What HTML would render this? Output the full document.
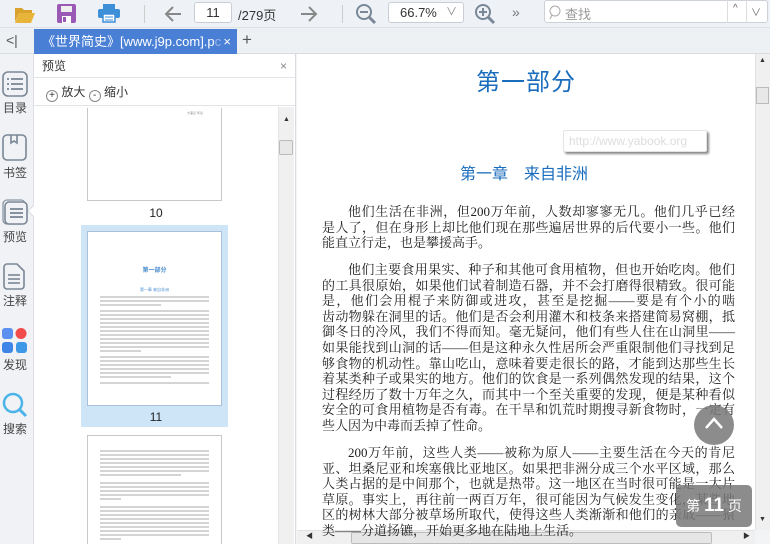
<!DOCTYPE html>
<html><head><meta charset="utf-8"><style>
*{margin:0;padding:0;box-sizing:border-box}
body{width:770px;height:544px;overflow:hidden;position:relative;background:#f3f4f6;font-family:"Liberation Sans","Noto Sans CJK SC",sans-serif;color:#333}
.abs{position:absolute}
.tb{left:0;top:0;width:770px;height:28px;background:#eef2f6;border-bottom:1px solid #dde2e8}
.tabbar{left:0;top:28px;width:770px;height:26px;background:#eef1f4;border-bottom:1px solid #d9dde2}
.tab{left:34px;top:29px;width:203px;height:25px;background:#4a7fd6;color:#fff;font-size:13px;line-height:25px;padding-left:8px;white-space:nowrap;overflow:hidden}
.side{left:0;top:54px;width:34px;height:490px;background:#f0f2f5;border-right:1px solid #dde0e4}
.side .lb{position:absolute;left:0;width:30px;font-size:12px;text-align:center;color:#444}
.panel{left:34px;top:54px;width:262px;height:490px;background:#fff;border-right:1px solid #d8dbe0}
.doc{left:297px;top:54px;width:458px;height:476px;background:#fff}
.txt{font-family:"Liberation Serif","Noto Serif CJK SC",serif;font-size:13px;color:#222;position:absolute;left:322px;width:413px}
.ln{height:15.6px;line-height:15.6px;white-space:nowrap;text-align:justify;text-align-last:justify}
.ln.i{padding-left:26px}
.ln.e{text-align-last:left}
.thumb{position:absolute;left:87px;width:135px;background:#fff;border:1px solid #c8c8c8}
.g{position:absolute;height:2px;background:#d4d4d4;left:12px;right:12px}
</style></head><body>
<div class="abs tb"></div>
<svg class="abs" style="left:14px;top:4px" width="22" height="20"><path d="M1 4h7l2 2h8v3H5L1 18z" fill="#d9a32e"/><path d="M5 9h16l-4 10H1z" fill="#e8b53a"/></svg>
<svg class="abs" style="left:57px;top:4px" width="19" height="19"><rect x="0" y="0" width="19" height="19" rx="2" fill="#9b59b6"/><rect x="4" y="2" width="11" height="6" fill="#eee"/><rect x="5" y="12" width="9" height="7" fill="#fff"/><rect x="6" y="13" width="3" height="5" fill="#9b59b6"/></svg>
<svg class="abs" style="left:98px;top:3px" width="22" height="20"><rect x="5" y="1" width="12" height="5" fill="#3d8fd8"/><rect x="0" y="6" width="22" height="9" rx="2" fill="#3d8fd8"/><rect x="5" y="11" width="12" height="8" fill="#fff" stroke="#3d8fd8" stroke-width="1.5"/><line x1="7" y1="14" x2="15" y2="14" stroke="#3d8fd8"/><line x1="7" y1="17" x2="15" y2="17" stroke="#3d8fd8"/></svg>
<div class="abs" style="left:144px;top:5px;width:1px;height:18px;background:#ccc"></div>
<svg class="abs" style="left:163px;top:4px" width="20" height="20"><path d="M18 10H3M10 3L3 10l7 7" stroke="#888" stroke-width="2" fill="none"/></svg>
<div class="abs" style="left:194px;top:2px;width:38px;height:21px;background:#fff;border:1px solid #c9ced6;border-radius:3px;font-size:13px;line-height:19px;text-align:center;color:#333">11</div>
<div class="abs" style="left:238px;top:5px;font-size:13px;color:#333">/279页</div>
<svg class="abs" style="left:299px;top:4px" width="20" height="20"><path d="M2 10h15M10 3l7 7-7 7" stroke="#888" stroke-width="2" fill="none"/></svg>
<div class="abs" style="left:342px;top:5px;width:1px;height:18px;background:#ccc"></div>
<svg class="abs" style="left:355px;top:3px" width="22" height="22"><circle cx="9" cy="9" r="7" stroke="#7a8796" stroke-width="2" fill="none"/><line x1="5" y1="9" x2="13" y2="9" stroke="#7a8796" stroke-width="2"/><line x1="14" y1="14" x2="20" y2="20" stroke="#7a8796" stroke-width="3"/></svg>
<div class="abs" style="left:388px;top:2px;width:76px;height:21px;background:#fff;border:1px solid #c9ced6;border-radius:3px;font-size:13px;line-height:19px;padding-left:11px;color:#333">66.7%<span style="position:absolute;right:6px;color:#888;font-size:11px">∨</span></div>
<svg class="abs" style="left:474px;top:3px" width="22" height="22"><circle cx="9" cy="9" r="7" stroke="#7a8796" stroke-width="2" fill="none"/><line x1="5" y1="9" x2="13" y2="9" stroke="#7a8796" stroke-width="2"/><line x1="9" y1="5" x2="9" y2="13" stroke="#7a8796" stroke-width="2"/><line x1="14" y1="14" x2="20" y2="20" stroke="#7a8796" stroke-width="3"/></svg>
<div class="abs" style="left:512px;top:4px;font-size:14px;color:#777">»</div>
<div class="abs" style="left:544px;top:0px;width:224px;height:23px;background:#fff;border:1px solid #cdd2d8;border-radius:3px"></div>
<svg class="abs" style="left:548px;top:4px" width="14" height="16"><circle cx="7" cy="7" r="5" stroke="#aaa" fill="none"/><line x1="4" y1="11" x2="2" y2="15" stroke="#aaa"/></svg>
<div class="abs" style="left:565px;top:4px;font-size:13px;color:#999">查找</div>
<div class="abs" style="left:727px;top:0;width:1px;height:23px;background:#ddd"></div>
<div class="abs" style="left:746px;top:0;width:1px;height:23px;background:#ddd"></div>
<div class="abs" style="left:733px;top:3px;font-size:10px;color:#666">^</div>
<div class="abs" style="left:751px;top:4px;font-size:10px;color:#666">∨</div>

<div class="abs tabbar"></div>
<div class="abs" style="left:6px;top:32px;font-size:14px;color:#555">&lt;|</div>
<div class="abs tab">《世界简史》[www.j9p.com].p<span style="color:#9cb8e6">c</span><span style="position:absolute;right:6px;top:0">×</span></div>
<div class="abs" style="left:242px;top:30px;font-size:17px;color:#555">+</div>

<div class="abs side">
<svg style="position:absolute;left:2px;top:17px" width="26" height="26"><rect x="1" y="1" width="24" height="24" rx="5" fill="none" stroke="#7a8796" stroke-width="1.6"/><g stroke="#7a8796" stroke-width="1.8"><line x1="5" y1="8" x2="7" y2="8"/><line x1="9" y1="8" x2="21" y2="8"/><line x1="5" y1="13" x2="7" y2="13"/><line x1="9" y1="13" x2="21" y2="13"/><line x1="5" y1="18" x2="7" y2="18"/><line x1="9" y1="18" x2="21" y2="18"/></g></svg>
<div class="lb" style="top:45px">目录</div>
<svg style="position:absolute;left:2px;top:80px" width="25" height="27"><rect x="1" y="1" width="23" height="25" rx="4" fill="none" stroke="#7a8796" stroke-width="1.6"/><path d="M9 1v8l3-2 3 2V1" stroke="#7a8796" stroke-width="1.6" fill="none"/></svg>
<div class="lb" style="top:110px">书签</div>
<svg style="position:absolute;left:2px;top:145px" width="26" height="26"><rect x="1" y="1" width="22" height="24" rx="4" fill="none" stroke="#8a96a4" stroke-width="1.3"/><rect x="3" y="3" width="22" height="22" rx="4" fill="#f0f2f5" stroke="#7a8796" stroke-width="1.6"/><g stroke="#7a8796" stroke-width="1.8"><line x1="8" y1="10" x2="21" y2="10"/><line x1="8" y1="14" x2="21" y2="14"/><line x1="8" y1="18" x2="21" y2="18"/></g></svg>
<div class="lb" style="top:174px">预览</div>
<svg style="position:absolute;left:3px;top:209px" width="22" height="27"><path d="M1 4a3 3 0 0 1 3-3h10l7 7v15a3 3 0 0 1-3 3H4a3 3 0 0 1-3-3z" fill="none" stroke="#7a8796" stroke-width="1.6"/><g stroke="#7a8796" stroke-width="1.6"><line x1="5" y1="12" x2="17" y2="12"/><line x1="5" y1="16" x2="17" y2="16"/><line x1="5" y1="20" x2="17" y2="20"/></g></svg>
<div class="lb" style="top:238px">注释</div>
<svg style="position:absolute;left:2px;top:274px" width="25" height="25"><rect x="0" y="0" width="11" height="11" rx="3" fill="#5b8ff0"/><circle cx="19" cy="5.5" r="5.5" fill="#f24b4b"/><rect x="0" y="14" width="11" height="11" rx="3" fill="#3d86e8"/><rect x="14" y="14" width="11" height="11" rx="3" fill="#3d98e8"/></svg>
<div class="lb" style="top:302px">发现</div>
<svg style="position:absolute;left:2px;top:338px" width="26" height="26"><circle cx="11" cy="11" r="9" stroke="#4ab4ea" stroke-width="2.5" fill="none"/><line x1="17" y1="17" x2="24" y2="24" stroke="#4ab4ea" stroke-width="3"/></svg>
<div class="lb" style="top:366px">搜索</div>
</div>
<svg class="abs" style="left:28px;top:204px" width="7" height="14"><path d="M7 0L0 7l7 7" fill="#fff" stroke="#d8dbe0"/></svg>

<div class="abs panel">
<div class="abs" style="left:0;top:0;width:261px;height:24px;border-bottom:1px solid #e2e4e8;font-size:12px;line-height:24px;padding-left:8px;color:#333">预览<span style="position:absolute;right:8px;color:#888">×</span></div>
<div class="abs" style="left:0;top:24px;width:261px;height:28px;border-bottom:1px solid #e2e4e8;font-size:12px;line-height:28px;padding-left:12px;color:#333">
<span style="display:inline-block;width:12px;height:12px;border:1px solid #888;border-radius:50%;vertical-align:-2px;font-size:10px;line-height:10px;text-align:center">+</span> 放大 <span style="display:inline-block;width:12px;height:12px;border:1px solid #888;border-radius:50%;vertical-align:-2px;font-size:10px;line-height:9px;text-align:center">-</span> 缩小</div>
<div class="abs" style="left:244px;top:53px;width:16px;height:437px;background:#f0f0f0;border-left:1px solid #e4e4e4"></div>
<div class="abs" style="left:249px;top:62px;font-size:7px;color:#333">▲</div>
<div class="abs" style="left:245px;top:86px;width:14px;height:15px;background:#e8e8e8;border:1px solid #bbb;border-radius:2px"></div>
</div>
<div class="abs" style="left:34px;top:108px;width:244px;height:436px;overflow:hidden">
<div class="thumb" style="left:53px;top:-8px;height:101px"><div style="position:absolute;right:18px;top:10px;font-size:3px;color:#888">大事记·年表</div></div>
<div class="abs" style="left:0;top:98px;width:244px;text-align:center;font-size:12px;color:#222">10</div>
<div class="abs" style="left:47px;top:117px;width:147px;height:202px;background:#cde5f7"></div>
<div class="thumb" style="left:53px;top:123px;height:175px;border-color:#a8c0d8">
<div style="position:absolute;left:0;right:0;top:33px;text-align:center;font-size:6px;color:#4a8ed0;font-weight:bold">第一部分</div>
<div style="position:absolute;left:0;right:0;top:55px;text-align:center;font-size:4px;color:#4a8ed0">第一章 来自非洲</div>
<div class="g" style="top:64px"></div><div class="g" style="top:68px"></div><div class="g" style="top:72px;right:60px"></div>
<div class="g" style="top:78px"></div><div class="g" style="top:82px"></div><div class="g" style="top:86px"></div><div class="g" style="top:90px"></div><div class="g" style="top:94px"></div><div class="g" style="top:98px"></div><div class="g" style="top:102px"></div><div class="g" style="top:106px"></div><div class="g" style="top:110px"></div><div class="g" style="top:114px"></div><div class="g" style="top:118px;right:80px"></div>
<div class="g" style="top:124px"></div><div class="g" style="top:128px"></div><div class="g" style="top:132px"></div><div class="g" style="top:136px"></div><div class="g" style="top:140px"></div><div class="g" style="top:144px;right:50px"></div>
<div class="g" style="top:150px"></div>
</div>
<div class="abs" style="left:0;top:302px;width:244px;text-align:center;font-size:12px;color:#222">11</div>
<div class="thumb" style="left:53px;top:327px;height:120px">
<div class="g" style="top:14px"></div><div class="g" style="top:18px"></div><div class="g" style="top:22px"></div><div class="g" style="top:26px"></div><div class="g" style="top:30px"></div><div class="g" style="top:34px"></div><div class="g" style="top:38px;right:40px"></div>
<div class="g" style="top:46px"></div><div class="g" style="top:50px"></div><div class="g" style="top:54px"></div><div class="g" style="top:58px"></div><div class="g" style="top:62px;right:100px"></div>
<div class="g" style="top:70px"></div><div class="g" style="top:74px"></div><div class="g" style="top:78px"></div><div class="g" style="top:82px"></div><div class="g" style="top:86px"></div><div class="g" style="top:90px"></div><div class="g" style="top:94px"></div><div class="g" style="top:98px"></div><div class="g" style="top:102px;right:100px"></div>
</div>
</div>

<div class="abs doc"></div>
<div class="abs" style="left:755px;top:54px;width:15px;height:476px;background:#f0f0f0;border-left:1px solid #e2e2e2"></div>
<div class="abs" style="left:759px;top:57px;font-size:7px;color:#333">▲</div>
<div class="abs" style="left:756px;top:87px;width:13px;height:17px;background:#e8e8e8;border:1px solid #bbb"></div>
<div class="abs" style="left:759px;top:516px;font-size:7px;color:#333">▼</div>
<div class="abs" style="left:297px;top:530px;width:458px;height:14px;background:#f0f0f0;border-top:1px solid #e2e2e2"></div>
<div class="abs" style="left:351px;top:532px;width:361px;height:12px;background:#e6e6e6;border:1px solid #bbb;border-radius:2px"></div>
<div class="abs" style="left:306px;top:531px;font-size:7px;color:#333">◀</div>
<div class="abs" style="left:743px;top:531px;font-size:7px;color:#333">▶</div>

<div class="abs" style="left:297px;top:62px;width:458px;text-align:center;font-size:24px;color:#1a6dbd;letter-spacing:1px">第一部分</div>
<div class="abs" style="left:563px;top:130px;width:144px;height:22px;background:#fff;border:1px solid #e4e4e8;border-radius:2px;box-shadow:2px 2px 2px #888;font-size:12px;line-height:20px;padding-left:5px;color:#ddd">http://www.yabook.org</div>
<div class="abs" style="left:460px;top:160px;font-size:16px;color:#1a6dbd">第一章　来自非洲</div>

<div class="txt" style="top:204px">
<div class="ln i">他们生活在非洲，但200万年前，人数却寥寥无几。他们几乎已经</div>
<div class="ln">是人了，但在身形上却比他们现在那些遍居世界的后代要小一些。他们</div>
<div class="ln e">能直立行走，也是攀援高手。</div>
</div>
<div class="txt" style="top:262px">
<div class="ln i">他们主要食用果实、种子和其他可食用植物，但也开始吃肉。他们</div>
<div class="ln">的工具很原始，如果他们试着制造石器，并不会打磨得很精致。很可能</div>
<div class="ln">是，他们会用棍子来防御或进攻，甚至是挖掘——要是有个小的啮</div>
<div class="ln">齿动物躲在洞里的话。他们是否会利用灌木和枝条来搭建简易窝棚，抵</div>
<div class="ln">御冬日的冷风，我们不得而知。毫无疑问，他们有些人住在山洞里——</div>
<div class="ln">如果能找到山洞的话——但是这种永久性居所会严重限制他们寻找到足</div>
<div class="ln">够食物的机动性。靠山吃山，意味着要走很长的路，才能到达那些生长</div>
<div class="ln">着某类种子或果实的地方。他们的饮食是一系列偶然发现的结果，这个</div>
<div class="ln">过程经历了数十万年之久，而其中一个至关重要的发现，便是某种看似</div>
<div class="ln">安全的可食用植物是否有毒。在干旱和饥荒时期搜寻新食物时，一定有</div>
<div class="ln e">些人因为中毒而丢掉了性命。</div>
</div>
<div class="txt" style="top:445px">
<div class="ln i">200万年前，这些人类——被称为原人——主要生活在今天的肯尼</div>
<div class="ln">亚、坦桑尼亚和埃塞俄比亚地区。如果把非洲分成三个水平区域，那么</div>
<div class="ln">人类占据的是中间那个，也就是热带。这一地区在当时很可能是一大片</div>
<div class="ln">草原。事实上，再往前一两百万年，很可能因为气候发生变化，某些地</div>
<div class="ln">区的树林大部分被草场所取代，使得这些人类渐渐和他们的亲戚——猿</div>
<div class="ln e">类——分道扬镳，开始更多地在陆地上生活。</div>
</div>

<div class="abs" style="left:694px;top:405px;width:40px;height:40px;border-radius:50%;background:rgba(120,120,120,0.85)"></div>
<svg class="abs" style="left:704px;top:416px" width="20" height="14"><path d="M2 12l8-9 8 9" stroke="#fff" stroke-width="2.5" fill="none"/></svg>
<div class="abs" style="left:676px;top:485px;width:76px;height:42px;border-radius:5px;background:rgba(120,120,120,0.85);color:#fff;font-size:14px;line-height:42px;text-align:center">第 <b style="font-size:19px">11</b> 页</div>
</body></html>
